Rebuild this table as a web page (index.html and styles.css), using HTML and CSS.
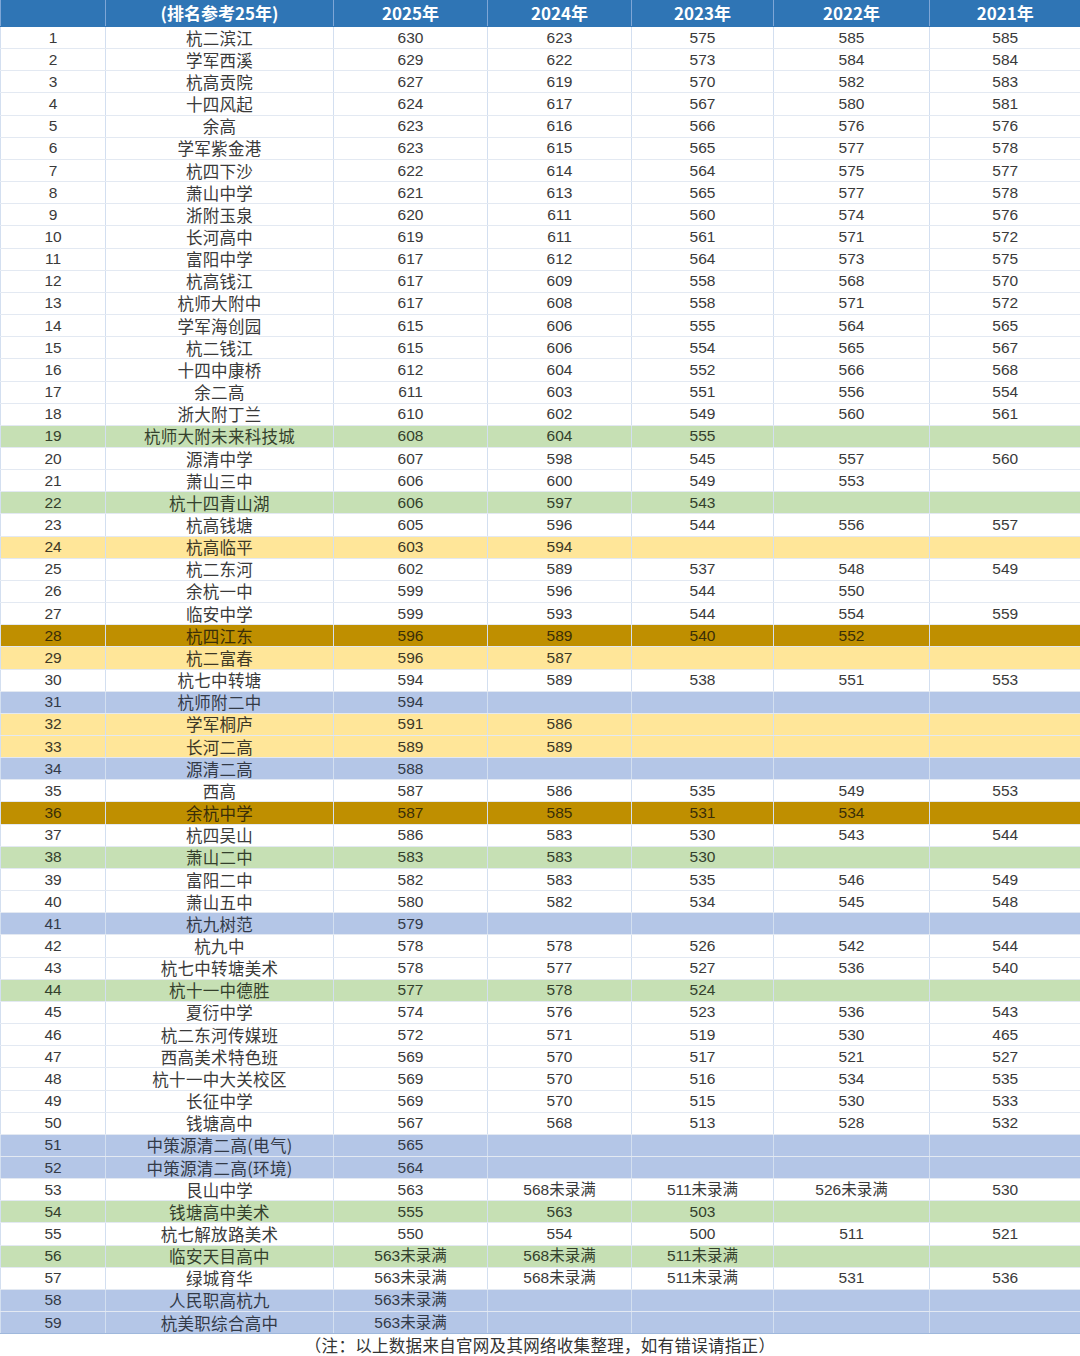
FILE: index.html
```html
<!DOCTYPE html>
<html lang="zh-CN">
<head>
<meta charset="utf-8">
<title>排名参考</title>
<link rel="stylesheet" href="styles.css">
</head>
<body>
<table class="score">
<colgroup>
<col class="c-rank"><col class="c-name"><col class="c-y25"><col class="c-y24"><col class="c-y23"><col class="c-y22"><col class="c-y21">
</colgroup>
<thead>
<tr><th></th><th>(排名参考25年)</th><th>2025年</th><th>2024年</th><th>2023年</th><th>2022年</th><th>2021年</th></tr>
</thead>
<tbody>
<tr><td>1</td><td class="nm">杭二滨江</td><td>630</td><td>623</td><td>575</td><td>585</td><td>585</td></tr>
<tr><td>2</td><td class="nm">学军西溪</td><td>629</td><td>622</td><td>573</td><td>584</td><td>584</td></tr>
<tr><td>3</td><td class="nm">杭高贡院</td><td>627</td><td>619</td><td>570</td><td>582</td><td>583</td></tr>
<tr><td>4</td><td class="nm">十四风起</td><td>624</td><td>617</td><td>567</td><td>580</td><td>581</td></tr>
<tr><td>5</td><td class="nm">余高</td><td>623</td><td>616</td><td>566</td><td>576</td><td>576</td></tr>
<tr><td>6</td><td class="nm">学军紫金港</td><td>623</td><td>615</td><td>565</td><td>577</td><td>578</td></tr>
<tr><td>7</td><td class="nm">杭四下沙</td><td>622</td><td>614</td><td>564</td><td>575</td><td>577</td></tr>
<tr><td>8</td><td class="nm">萧山中学</td><td>621</td><td>613</td><td>565</td><td>577</td><td>578</td></tr>
<tr><td>9</td><td class="nm">浙附玉泉</td><td>620</td><td>611</td><td>560</td><td>574</td><td>576</td></tr>
<tr><td>10</td><td class="nm">长河高中</td><td>619</td><td>611</td><td>561</td><td>571</td><td>572</td></tr>
<tr><td>11</td><td class="nm">富阳中学</td><td>617</td><td>612</td><td>564</td><td>573</td><td>575</td></tr>
<tr><td>12</td><td class="nm">杭高钱江</td><td>617</td><td>609</td><td>558</td><td>568</td><td>570</td></tr>
<tr><td>13</td><td class="nm">杭师大附中</td><td>617</td><td>608</td><td>558</td><td>571</td><td>572</td></tr>
<tr><td>14</td><td class="nm">学军海创园</td><td>615</td><td>606</td><td>555</td><td>564</td><td>565</td></tr>
<tr><td>15</td><td class="nm">杭二钱江</td><td>615</td><td>606</td><td>554</td><td>565</td><td>567</td></tr>
<tr><td>16</td><td class="nm">十四中康桥</td><td>612</td><td>604</td><td>552</td><td>566</td><td>568</td></tr>
<tr><td>17</td><td class="nm">余二高</td><td>611</td><td>603</td><td>551</td><td>556</td><td>554</td></tr>
<tr><td>18</td><td class="nm">浙大附丁兰</td><td>610</td><td>602</td><td>549</td><td>560</td><td>561</td></tr>
<tr class="green"><td>19</td><td class="nm">杭师大附未来科技城</td><td>608</td><td>604</td><td>555</td><td></td><td></td></tr>
<tr><td>20</td><td class="nm">源清中学</td><td>607</td><td>598</td><td>545</td><td>557</td><td>560</td></tr>
<tr><td>21</td><td class="nm">萧山三中</td><td>606</td><td>600</td><td>549</td><td>553</td><td></td></tr>
<tr class="green"><td>22</td><td class="nm">杭十四青山湖</td><td>606</td><td>597</td><td>543</td><td></td><td></td></tr>
<tr><td>23</td><td class="nm">杭高钱塘</td><td>605</td><td>596</td><td>544</td><td>556</td><td>557</td></tr>
<tr class="yellow"><td>24</td><td class="nm">杭高临平</td><td>603</td><td>594</td><td></td><td></td><td></td></tr>
<tr><td>25</td><td class="nm">杭二东河</td><td>602</td><td>589</td><td>537</td><td>548</td><td>549</td></tr>
<tr><td>26</td><td class="nm">余杭一中</td><td>599</td><td>596</td><td>544</td><td>550</td><td></td></tr>
<tr><td>27</td><td class="nm">临安中学</td><td>599</td><td>593</td><td>544</td><td>554</td><td>559</td></tr>
<tr class="gold"><td>28</td><td class="nm">杭四江东</td><td>596</td><td>589</td><td>540</td><td>552</td><td></td></tr>
<tr class="yellow"><td>29</td><td class="nm">杭二富春</td><td>596</td><td>587</td><td></td><td></td><td></td></tr>
<tr><td>30</td><td class="nm">杭七中转塘</td><td>594</td><td>589</td><td>538</td><td>551</td><td>553</td></tr>
<tr class="blue"><td>31</td><td class="nm">杭师附二中</td><td>594</td><td></td><td></td><td></td><td></td></tr>
<tr class="yellow"><td>32</td><td class="nm">学军桐庐</td><td>591</td><td>586</td><td></td><td></td><td></td></tr>
<tr class="yellow"><td>33</td><td class="nm">长河二高</td><td>589</td><td>589</td><td></td><td></td><td></td></tr>
<tr class="blue"><td>34</td><td class="nm">源清二高</td><td>588</td><td></td><td></td><td></td><td></td></tr>
<tr><td>35</td><td class="nm">西高</td><td>587</td><td>586</td><td>535</td><td>549</td><td>553</td></tr>
<tr class="gold"><td>36</td><td class="nm">余杭中学</td><td>587</td><td>585</td><td>531</td><td>534</td><td></td></tr>
<tr><td>37</td><td class="nm">杭四吴山</td><td>586</td><td>583</td><td>530</td><td>543</td><td>544</td></tr>
<tr class="green"><td>38</td><td class="nm">萧山二中</td><td>583</td><td>583</td><td>530</td><td></td><td></td></tr>
<tr><td>39</td><td class="nm">富阳二中</td><td>582</td><td>583</td><td>535</td><td>546</td><td>549</td></tr>
<tr><td>40</td><td class="nm">萧山五中</td><td>580</td><td>582</td><td>534</td><td>545</td><td>548</td></tr>
<tr class="blue"><td>41</td><td class="nm">杭九树范</td><td>579</td><td></td><td></td><td></td><td></td></tr>
<tr><td>42</td><td class="nm">杭九中</td><td>578</td><td>578</td><td>526</td><td>542</td><td>544</td></tr>
<tr><td>43</td><td class="nm">杭七中转塘美术</td><td>578</td><td>577</td><td>527</td><td>536</td><td>540</td></tr>
<tr class="green"><td>44</td><td class="nm">杭十一中德胜</td><td>577</td><td>578</td><td>524</td><td></td><td></td></tr>
<tr><td>45</td><td class="nm">夏衍中学</td><td>574</td><td>576</td><td>523</td><td>536</td><td>543</td></tr>
<tr><td>46</td><td class="nm">杭二东河传媒班</td><td>572</td><td>571</td><td>519</td><td>530</td><td>465</td></tr>
<tr><td>47</td><td class="nm">西高美术特色班</td><td>569</td><td>570</td><td>517</td><td>521</td><td>527</td></tr>
<tr><td>48</td><td class="nm">杭十一中大关校区</td><td>569</td><td>570</td><td>516</td><td>534</td><td>535</td></tr>
<tr><td>49</td><td class="nm">长征中学</td><td>569</td><td>570</td><td>515</td><td>530</td><td>533</td></tr>
<tr><td>50</td><td class="nm">钱塘高中</td><td>567</td><td>568</td><td>513</td><td>528</td><td>532</td></tr>
<tr class="blue"><td>51</td><td class="nm">中策源清二高(电气)</td><td>565</td><td></td><td></td><td></td><td></td></tr>
<tr class="blue"><td>52</td><td class="nm">中策源清二高(环境)</td><td>564</td><td></td><td></td><td></td><td></td></tr>
<tr><td>53</td><td class="nm">艮山中学</td><td>563</td><td>568未录满</td><td>511未录满</td><td>526未录满</td><td>530</td></tr>
<tr class="green"><td>54</td><td class="nm">钱塘高中美术</td><td>555</td><td>563</td><td>503</td><td></td><td></td></tr>
<tr><td>55</td><td class="nm">杭七解放路美术</td><td>550</td><td>554</td><td>500</td><td>511</td><td>521</td></tr>
<tr class="green"><td>56</td><td class="nm">临安天目高中</td><td>563未录满</td><td>568未录满</td><td>511未录满</td><td></td><td></td></tr>
<tr><td>57</td><td class="nm">绿城育华</td><td>563未录满</td><td>568未录满</td><td>511未录满</td><td>531</td><td>536</td></tr>
<tr class="blue"><td>58</td><td class="nm">人民职高杭九</td><td>563未录满</td><td></td><td></td><td></td><td></td></tr>
<tr class="blue"><td>59</td><td class="nm">杭美职综合高中</td><td>563未录满</td><td></td><td></td><td></td><td></td></tr>
</tbody>
</table>
<p class="note">（注：以上数据来自官网及其网络收集整理，如有错误请指正）</p>
</body>
</html>
```

FILE: styles.css
```css
html, body {
  margin: 0;
  padding: 0;
  background: #ffffff;
}

body {
  width: 1080px;
  font-family: "Liberation Sans", "Noto Sans CJK SC", sans-serif;
  color: #333333;
}

.score {
  width: 1080px;
  table-layout: fixed;
  border-collapse: collapse;
  border-left: 1px solid #9fb8dc;
}

.c-rank { width: 105px; }
.c-name { width: 228px; }
.c-y25 { width: 154px; }
.c-y24 { width: 144px; }
.c-y23 { width: 142px; }
.c-y22 { width: 156px; }
.c-y21 { width: 151px; }

.score th {
  height: 26px;
  padding: 0;
  background: #2f75b5;
  color: #ffffff;
  font-family: "Noto Sans CJK SC", sans-serif;
  font-weight: 700;
  font-size: 17px;
  line-height: 26px;
  text-align: center;
  border-left: 1px solid #7ea6d6;
  border-bottom: 1px solid #2f75b5;
}

.score tbody tr {
  height: 21.16px;
}

.score td {
  padding: 0;
  height: 21.16px;
  line-height: 20px;
  text-align: center;
  font-size: 15.5px;
  font-family: "Liberation Sans", "Noto Sans CJK SC", sans-serif;
  color: #3a3a3a;
  border-left: 1px solid #d3dff0;
  border-bottom: 1px solid #e3e9f2;
  white-space: nowrap;
  overflow: hidden;
}

.score td.nm {
  font-family: "Noto Sans CJK SC", sans-serif;
  font-size: 16.5px;
  letter-spacing: 0.3px;
}

.score tr.green td { background: #c6e0b4; color: #34402c; }
.score tr.yellow td { background: #ffe699; color: #3d3826; }
.score tr.gold td { background: #bf8f00; color: #3a2e08; }
.score tr.blue td { background: #b4c6e7; color: #333a47; }

.score tbody tr:last-child td {
  border-bottom: 1px solid #9fb8dc;
}

.note {
  margin: 0;
  height: 22px;
  line-height: 22px;
  text-align: center;
  font-family: "Noto Sans CJK SC", sans-serif;
  font-size: 16.5px;
  letter-spacing: 0.3px;
  color: #333333;
  border-bottom: 1px solid #d8dde5;
}
```
